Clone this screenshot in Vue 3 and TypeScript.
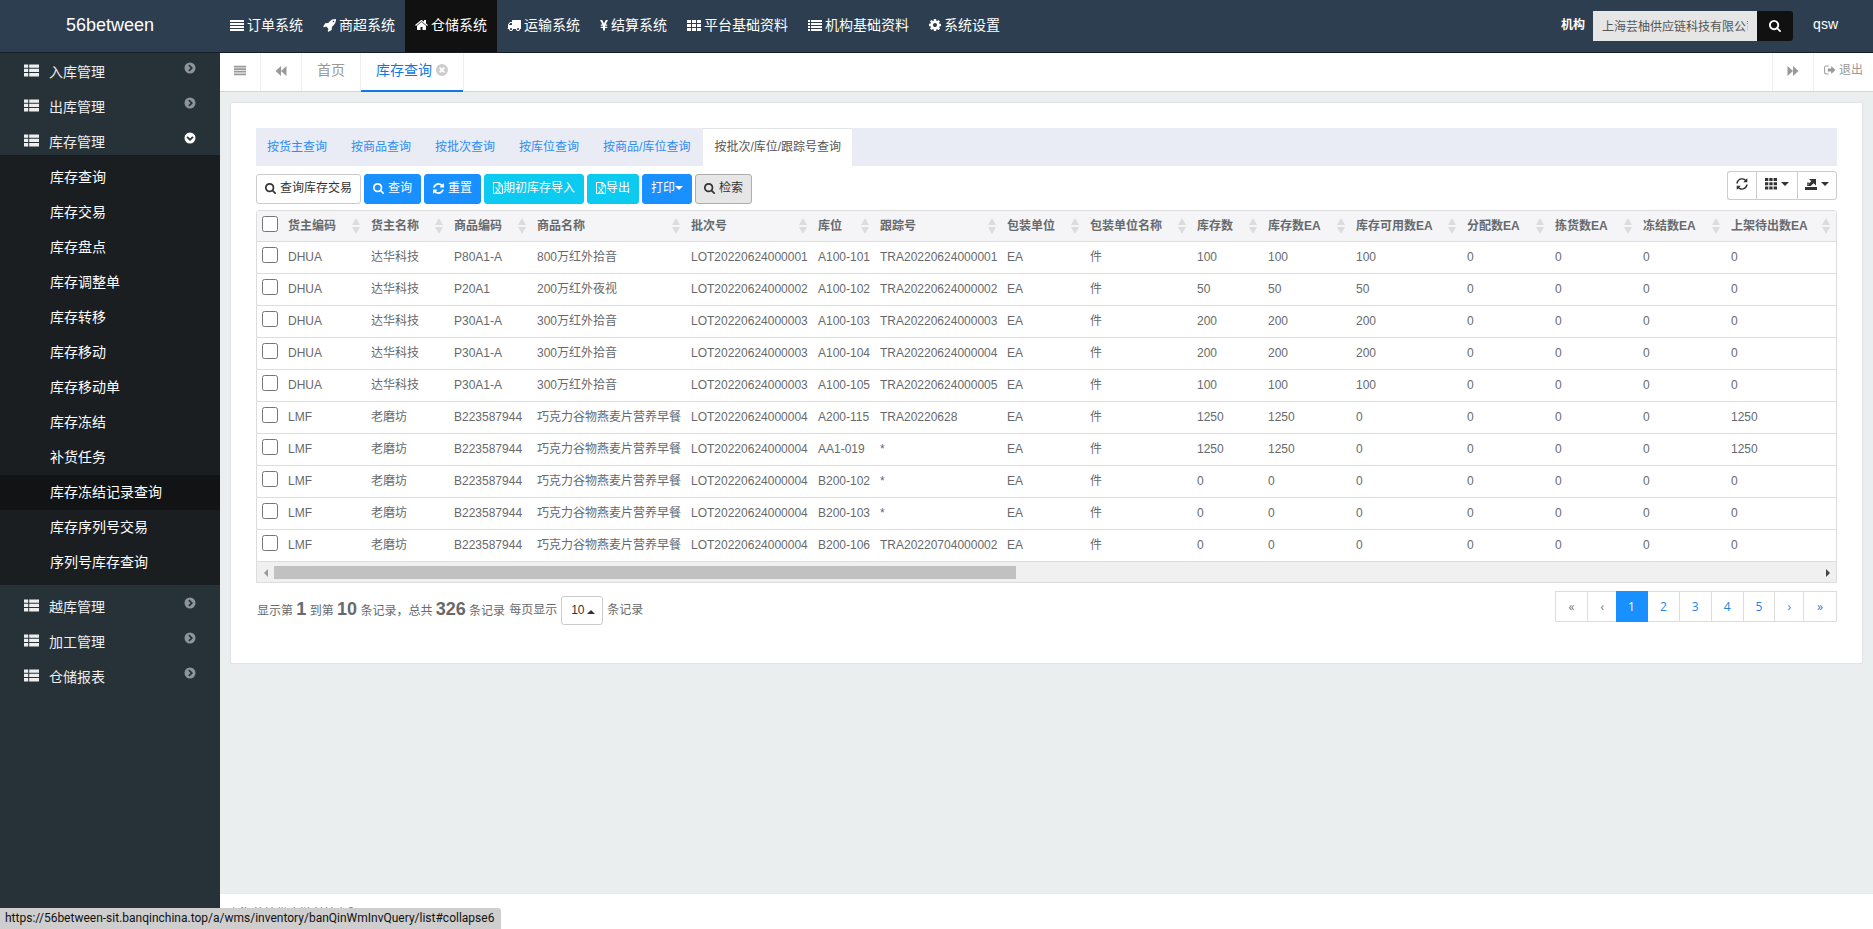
<script setup lang="ts">
import { h, ref, computed } from 'vue'

interface Glyph { box: string; d: string }
type Row = string[]

const glyphs: Record<string, Glyph> = {
  justify: { box: '0 0 14 14', d: 'M0 2h14v2H0zM0 5h14v2H0zM0 8h14v2H0zM0 11h14v2H0z' },
  rocket: { box: '0 0 1664 1792', d: 'M1440 448q0-40-28-68t-68-28-68 28-28 68 28 68 68 28 68-28 28-68zm224-288q0 249-75.5 430.5t-253.5 360.5q-81 80-195 176l-20 379q-2 16-16 26l-384 224q-7 4-16 4-12 0-23-9l-64-64q-13-14-8-32l85-276-281-281-276 85q-3 1-9 1-14 0-23-9l-64-64q-17-19-5-39l224-384q10-14 26-16l379-20q96-114 176-195 188-187 358-258t431-71q14 0 24 9.5t10 22.5z' },
  home: { box: '64 0 1664 1792', d: 'M1472 992v480q0 26-19 45t-45 19h-384v-384h-256v384h-384q-26 0-45-19t-19-45v-480q0-1 .5-3t.5-3l575-474 575 474q1 2 1 6zm223-69l-62 74q-8 9-21 11h-3q-13 0-21-7l-692-577-692 577q-12 8-24 7-13-2-21-11l-62-74q-8-10-7-23.5t11-21.5l719-599q32-26 76-26t76 26l244 204v-195q0-14 9-23t23-9h192q14 0 23 9t9 23v408l219 182q10 8 11 21.5t-7 23.5z' },
  truck: { box: '0 0 1792 1792', d: 'M640 1408q0-52-38-90t-90-38-90 38-38 90 38 90 90 38 90-38 38-90zm-384-512h384v-256h-158q-13 0-22 9l-195 195q-9 9-9 22v30zm1280 512q0-52-38-90t-90-38-90 38-38 90 38 90 90 38 90-38 38-90zm256-1088v1024q0 15-4 26.5t-13.5 18.5-16.5 11.5-23.5 6-22.5 2-25.5 0-22.5-.5q0 106-75 181t-181 75-181-75-75-181h-384q0 106-75 181t-181 75-181-75-75-181h-64q-3 0-22.5.5t-25.5 0-22.5-2-23.5-6-16.5-11.5-13.5-18.5-4-26.5q0-26 19-45t45-19v-320q0-8-.5-35t0-38 2.5-34.5 6.5-37 14-30.5 22.5-30l198-198q19-19 50.5-32t58.5-13h160v-192q0-26 19-45t45-19h1024q26 0 45 19t19 45z' },
  yen: { box: '0 0 8 14', d: 'M0 2h2.2L4 5.6 5.8 2H8L5.6 6.6H7.2v1.2H5v.9h2.2v1.2H5V12.500H3V9.900H.8V8.700H3v-.9H.8V6.600h1.600z' },
  cells: { box: '0 0 14 14', d: 'M0 2h4v3H0zM5 2h4v3H5zM10 2h4v3h-4zM0 6h4v3H0zM5 6h4v3H5zM10 6h4v3h-4zM0 10h4v3H0zM5 10h4v3H5zM10 10h4v3h-4z' },
  squares: { box: '0 0 12 12', d: 'M0 0h3.300v3H0zM4.300 0h3.300v3H4.300zM8.600 0H12v3H8.600zM0 4.300h3.300v3H0zM4.300 4.300h3.300v3H4.300zM8.600 4.300H12v3H8.600zM0 8.600h3.300v3H0zM4.300 8.600h3.300v3H4.300zM8.600 8.600H12v3H8.600z' },
  list: { box: '0 0 14 14', d: 'M0 2h2v2H0zM3 2h11v2H3zM0 5h2v2H0zM3 5h11v2H3zM0 8h2v2H0zM3 8h11v2H3zM0 11h2v2H0zM3 11h11v2H3z' },
  cog: { box: '128 0 1536 1792', d: 'M1152 896q0-106-75-181t-181-75-181 75-75 181 75 181 181 75 181-75 75-181zm512-109v222q0 12-8 23t-20 13l-185 28q-19 54-39 91 35 50 107 138 10 12 10 25t-9 23q-27 37-99 108t-94 71q-12 0-26-9l-138-108q-44 23-91 38-16 136-29 186-7 28-36 28h-222q-14 0-24.5-8.5t-11.5-21.5l-28-184q-49-16-90-37l-141 107q-10 9-25 9-14 0-25-11-126-114-165-168-7-10-7-23 0-12 8-23 15-21 51-66.5t54-70.5q-27-50-41-99l-183-27q-13-2-21-12.5t-8-23.5v-222q0-12 8-23t19-13l186-28q14-46 39-92-40-57-107-138-10-12-10-24 0-10 9-23 26-36 98.5-107.5t94.5-71.5q13 0 26 10l138 107q44-23 91-38 16-136 29-186 7-28 36-28h222q14 0 24.5 8.5t11.5 21.5l28 184q49 16 90 37l142-107q9-9 24-9 13 0 25 10 129 119 165 170 7 8 7 22 0 12-8 23-15 21-51 66.5t-54 70.5q26 50 41 98l183 28q13 2 21 12.5t8 23.5z' },
  search: { box: '64 128 1664 1664', d: 'M1216 832q0-185-131.5-316.5t-316.5-131.5-316.5 131.5-131.5 316.5 131.5 316.5 316.5 131.5 316.5-131.5 131.5-316.5zm512 832q0 52-38 90t-90 38q-54 0-90-38l-343-342q-179 124-399 124-143 0-273.5-55.5t-225-150-150-225-55.5-273.5 55.5-273.5 150-225 225-150 273.5-55.5 273.5 55.5 225 150 150 225 55.5 273.5q0 220-124 399l343 343q37 37 37 90z' },
  refresh: { box: '128 128 1536 1536', d: 'M1639 1056q0 5-1 7-64 268-268 434.5t-478 166.5q-146 0-282.5-55t-243.5-157l-129 129q-19 19-45 19t-45-19-19-45v-448q0-26 19-45t45-19h448q26 0 45 19t19 45-19 45l-137 137q71 66 161 102t187 36q134 0 250-65t186-179q11-17 53-117 8-23 30-23h192q13 0 22.5 9.5t9.5 22.5zm25-800v448q0 26-19 45t-45 19h-448q-26 0-45-19t-19-45 19-45l138-138q-148-137-349-137-134 0-250 65t-186 179q-11 17-53 117-8 23-30 23h-199q-13 0-22.5-9.5t-9.5-22.5v-7q65-268 270-434.5t480-166.5q146 0 284 55.5t245 156.500l130-129q19-19 45-19t45 19 19 45z' },
  reload: { box: '0 0 12 12', d: 'M.3 5.400C.6 2.200 3.100.2 6 .2c1.500 0 2.800.5 3.800 1.400L11.300.2v4.100H7.200l1.600-1.600C8 2 7.100 1.600 6 1.600 3.900 1.600 2.200 3 1.800 5.400zM11.700 6.600c-.3 3.200-2.800 5.200-5.700 5.200-1.500 0-2.800-.5-3.800-1.400L.7 11.800V7.700h4.100L3.200 9.300c.8.7 1.700 1.100 2.800 1.100 2.100 0 3.800-1.400 4.200-3.800z' },
  excel: { box: '0 0 10 12', d: 'M0 0h6.500L10 3.500V12H0zM1 1v10h8V4.500H5.500V1zM6.500 1.300v2.200h2.200zM2.200 5.400h2v.7h-.4L5 7.600l1-1.500h-.4v-.7h2v.7h-.5L5.500 8.200 7.200 10h.6v.7H5.600V10H6L4.900 8.800 4 10h.4v.7h-2.200V10h.5l1.700-1.900-1.600-2h-.6z' },
  thlist: { box: '0 0 15 13', d: 'M0 .5h4.200v3.300H0zM5.200.5H15v3.300H5.200zM0 4.800h4.200v3.300H0zM5.200 4.800H15v3.300H5.200zM0 9.100h4.200v3.300H0zM5.200 9.100H15v3.300H5.200z' },
  right: { box: '0 0 12 12', d: 'M6 .5a5.500 5.500 0 1 1 0 11a5.500 5.500 0 1 1 0-11zM4.300 3.700 6.600 6 4.300 8.300l1.200 1.200L9 6 5.500 2.500z' },
  down: { box: '0 0 12 12', d: 'M6 .5a5.500 5.500 0 1 1 0 11a5.500 5.500 0 1 1 0-11zM3.700 4.300 2.500 5.500 6 9l3.500-3.500-1.200-1.200L6 6.600z' },
  close: { box: '0 0 12 12', d: 'M6 0a6 6 0 1 1 0 12a6 6 0 1 1 0-12zM4.200 3 3 4.200 4.800 6 3 7.800 4.200 9 6 7.200 7.800 9 9 7.800 7.200 6 9 4.200 7.800 3 6 4.800z' },
  back: { box: '0 0 12 12', d: 'M6 1v10L.5 6zM11.500 1v10L6 6z' },
  forward: { box: '0 0 12 12', d: 'M.5 1v10L6 6zM6 1v10l5.500-5z' },
  exit: { box: '0 0 12 12', d: 'M4.500 1.500v1H2.300c-.7 0-1.200.5-1.200 1.200v4.600c0 .7.500 1.200 1.200 1.200h2.200v1H2.300A2.200 2.200 0 0 1 .1 8.300V3.700a2.200 2.200 0 0 1 2.200-2.200zM3.800 4.500h3.400V2L11.500 6 7.200 10V7.500H3.800z' },
  share: { box: '0 0 12 12', d: 'M0 9h12v3H0zM4 1h7v6.500L8.600 5.300 5.700 8.100H2.200v-1L6.300 3.200zM2.200 4.600h1.600v2H2.200z' },
  caret: { box: '0 0 8 4', d: 'M0 0h8L4 4z' },
  caretUp: { box: '0 0 8 4', d: 'M0 4h8L4 0z' },
  sort: { box: '0 0 8 16', d: 'M0 7h8L4 0zM0 9h8L4 16z' },
  leftArrow: { box: '0 0 4 8', d: 'M4 0v8L0 4z' },
  rightArrow: { box: '0 0 4 8', d: 'M0 0v8l4-4z' },
}

const Icon = (props: { name: string }) =>
  h('svg', { viewBox: glyphs[props.name].box, 'aria-hidden': 'true', class: 'icon' }, [
    h('path', { d: glyphs[props.name].d, fill: 'currentColor', 'fill-rule': 'evenodd' }),
  ])
Icon.props = ['name']

const systems = [
  { icon: 'justify', label: '订单系统' },
  { icon: 'rocket', label: '商超系统' },
  { icon: 'home', label: '仓储系统' },
  { icon: 'truck', label: '运输系统' },
  { icon: 'yen', label: '结算系统' },
  { icon: 'cells', label: '平台基础资料' },
  { icon: 'list', label: '机构基础资料' },
  { icon: 'cog', label: '系统设置' },
]
const activeSystem = ref('仓储系统')

const menu = [
  { label: '入库管理', items: [] as string[] },
  { label: '出库管理', items: [] as string[] },
  {
    label: '库存管理',
    items: ['库存查询', '库存交易', '库存盘点', '库存调整单', '库存转移', '库存移动', '库存移动单', '库存冻结', '补货任务', '库存冻结记录查询', '库存序列号交易', '序列号库存查询'],
  },
  { label: '越库管理', items: [] as string[] },
  { label: '加工管理', items: [] as string[] },
  { label: '仓储报表', items: [] as string[] },
]
const hovered = ref('库存冻结记录查询')

const views = ['按货主查询', '按商品查询', '按批次查询', '按库位查询', '按商品/库位查询', '按批次/库位/跟踪号查询']
const activeView = ref('按批次/库位/跟踪号查询')

const columns = [
  { label: '货主编码', width: 83 },
  { label: '货主名称', width: 83 },
  { label: '商品编码', width: 83 },
  { label: '商品名称', width: 154 },
  { label: '批次号', width: 127 },
  { label: '库位', width: 62 },
  { label: '跟踪号', width: 127 },
  { label: '包装单位', width: 83 },
  { label: '包装单位名称', width: 107 },
  { label: '库存数', width: 71 },
  { label: '库存数EA', width: 88 },
  { label: '库存可用数EA', width: 111 },
  { label: '分配数EA', width: 88 },
  { label: '拣货数EA', width: 88 },
  { label: '冻结数EA', width: 88 },
  { label: '上架待出数EA', width: 110 },
]

const dhua = (sku: string, name: string, lot: string, loc: string, tra: string, qty: string): Row =>
  ['DHUA', '达华科技', sku, name, 'LOT20220624' + lot, loc, 'TRA20220624' + tra, 'EA', '件', qty, qty, qty, '0', '0', '0', '0']
const lmf = (loc: string, tra: string, qty: string): Row =>
  ['LMF', '老磨坊', 'B223587944', '巧克力谷物燕麦片营养早餐', 'LOT20220624000004', loc, tra, 'EA', '件', qty, qty, '0', '0', '0', '0', qty]

const rows: Row[] = [
  dhua('P80A1-A', '800万红外拾音', '000001', 'A100-101', '000001', '100'),
  dhua('P20A1', '200万红外夜视', '000002', 'A100-102', '000002', '50'),
  dhua('P30A1-A', '300万红外拾音', '000003', 'A100-103', '000003', '200'),
  dhua('P30A1-A', '300万红外拾音', '000003', 'A100-104', '000004', '200'),
  dhua('P30A1-A', '300万红外拾音', '000003', 'A100-105', '000005', '100'),
  lmf('A200-115', 'TRA20220628', '1250'),
  lmf('AA1-019', '*', '1250'),
  lmf('B200-102', '*', '0'),
  lmf('B200-103', '*', '0'),
  lmf('B200-106', 'TRA20220704000002', '0'),
]
const picked = ref<number[]>([])
const allPicked = computed({
  get: () => picked.value.length === rows.length,
  set: (on: boolean) => { picked.value = on ? rows.map((_, i) => i) : [] },
})

const pages = ['«', '‹', '1', '2', '3', '4', '5', '›', '»']
const page = ref('1')
const pageSize = ref('10')
const org = ref('上海芸柚供应链科技有限公司')
</script>

<template>
  <div class="app">
    <header class="top">
      <a class="brand" href="#">56between</a>
      <nav class="systems">
        <a v-for="s in systems" :key="s.label" href="#" :class="{ active: s.label === activeSystem }" @click.prevent="activeSystem = s.label">
          <Icon :name="s.icon" :class="s.icon" />{{ s.label }}
        </a>
      </nav>
      <form class="org" @submit.prevent>
        <label for="org">机构</label>
        <input id="org" v-model="org" type="text" readonly>
        <button type="button" aria-label="选择机构"><Icon name="search" /></button>
      </form>
      <a class="user" href="#">qsw</a>
    </header>

    <div class="body">
      <aside class="side">
        <template v-for="m in menu" :key="m.label">
          <a class="group" href="#" @click.prevent>
            <Icon name="thlist" class="thlist" />
            <span>{{ m.label }}</span>
            <Icon :name="m.items.length ? 'down' : 'right'" class="arrow" :class="{ open: m.items.length }" />
          </a>
          <ul v-if="m.items.length" class="sub">
            <li v-for="i in m.items" :key="i">
              <a href="#" :class="{ hover: i === hovered }" @mouseenter="hovered = i" @click.prevent>{{ i }}</a>
            </li>
          </ul>
        </template>
      </aside>

      <div class="page">
        <div class="tabs">
          <button type="button" class="cell bars" aria-label="折叠菜单"><Icon name="justify" /></button>
          <button type="button" class="cell skip" aria-label="向左"><Icon name="back" /></button>
          <a class="tab" href="#">首页</a>
          <a class="tab current" href="#">库存查询<Icon name="close" /></a>
          <button type="button" class="cell skip last" aria-label="向右"><Icon name="forward" /></button>
          <a class="exit" href="#"><Icon name="exit" />退出</a>
        </div>

        <main class="card">
          <nav class="views">
            <a v-for="v in views" :key="v" href="#" :class="{ active: v === activeView }" @click.prevent="activeView = v">{{ v }}</a>
          </nav>

          <div class="toolbar">
            <div class="actions">
              <button type="button" class="btn"><Icon name="search" class="lead" />查询库存交易</button>
              <button type="button" class="btn blue"><Icon name="search" class="lead" />查询</button>
              <button type="button" class="btn blue"><Icon name="refresh" class="lead" />重置</button>
              <button type="button" class="btn cyan"><Icon name="excel" class="excel" />期初库存导入</button>
              <button type="button" class="btn cyan"><Icon name="excel" class="excel" />导出</button>
              <button type="button" class="btn blue">打印<Icon name="caret" class="caret" /></button>
              <button type="button" class="btn pressed"><Icon name="search" class="lead" />检索</button>
            </div>
            <div class="tools">
              <button type="button" aria-label="刷新"><Icon name="reload" /></button>
              <button type="button" aria-label="列"><Icon name="squares" /><Icon name="caret" class="caret" /></button>
              <button type="button" aria-label="导出数据"><Icon name="share" /><Icon name="caret" class="caret" /></button>
            </div>
          </div>

          <div class="records">
            <table>
              <colgroup>
                <col class="pick">
                <col v-for="c in columns" :key="c.label" :style="{ width: c.width + 'px' }">
              </colgroup>
              <thead>
                <tr>
                  <th><input v-model="allPicked" type="checkbox" aria-label="全选"></th>
                  <th v-for="c in columns" :key="c.label" scope="col">
                    <div class="head">{{ c.label }}<Icon name="sort" class="sort" /></div>
                  </th>
                </tr>
              </thead>
              <tbody>
                <tr v-for="(r, i) in rows" :key="i">
                  <td><input v-model="picked" type="checkbox" :value="i" :aria-label="'选择第' + (i + 1) + '行'"></td>
                  <td v-for="(cell, j) in r" :key="j">{{ cell }}</td>
                </tr>
              </tbody>
            </table>
            <div class="scroll">
              <Icon name="leftArrow" class="dim" />
              <div class="track"><div class="thumb"></div></div>
              <Icon name="rightArrow" />
            </div>
          </div>

          <div class="foot">
            <div class="info">
              <span>显示第 <b>1</b> 到第 <b>10</b> 条记录，总共 <b>326</b> 条记录</span>
              <label for="size">每页显示</label>
              <span class="size">
                <select id="size" v-model="pageSize"><option>10</option><option>25</option><option>50</option></select>
                <Icon name="caretUp" class="caret" />
              </span>
              <span>条记录</span>
            </div>
            <nav class="pager" aria-label="分页">
              <a v-for="(p, i) in pages" :key="p" href="#" :class="{ active: p === page, off: i < 2 }" @click.prevent>{{ p }}</a>
            </nav>
          </div>
        </main>

        <footer class="bottom">上海芸柚供应链科技<a href="#">有限公司</a></footer>
      </div>
    </div>

    <div class="status">https://56between-sit.banqinchina.top/a/wms/inventory/banQinWmInvQuery/list#collapse6</div>
  </div>
</template>

<style>
body { margin: 0; }
</style>

<style scoped>
.app {
  min-height: 100vh;
  display: flex;
  flex-direction: column;
  font: 12px/18px "Liberation Sans", "Noto Sans CJK SC", sans-serif;
  color: #676a6c;
}
.app *, .app *::before { box-sizing: border-box; }
a { color: inherit; text-decoration: none; }
button, input, select { font: inherit; color: inherit; margin: 0; }
button { cursor: pointer; }
.icon { display: block; flex: none; width: 12px; height: 12px; }
.icon.caret { width: 8px; height: 4px; }

.top {
  display: flex;
  height: 53px;
  background: #2c3e50;
  border-bottom: 1px solid #161d24;
  color: #fff;
}
.brand { width: 220px; text-align: center; font-size: 18px; line-height: 50px; }
.systems { display: flex; flex: 1; font-size: 14px; line-height: 50px; }
.systems a { display: flex; align-items: center; gap: 3px; padding: 0 10px 2px; white-space: nowrap; }
.systems a.active { background: #111; }
.systems .icon { width: 14px; height: 14px; }
.systems .icon.rocket, .systems .icon.home { width: 13px; }
.systems .icon.yen { width: 8px; }
.systems .icon.cog { width: 12px; }
.org { display: flex; align-items: center; }
.org label { font-weight: 700; margin-right: 8px; padding-bottom: 2px; }
.org input {
  width: 164px;
  height: 30px;
  padding: 0 8px 2px;
  border: 1px solid #e5e6e7;
  border-radius: 0;
  background: #e6e6e6;
  color: #555;
}
.org button {
  width: 36px;
  height: 30px;
  padding: 0 12px;
  border: 0;
  border-radius: 0 3px 3px 0;
  background: #111;
  color: #fff;
}
.user { padding: 0 35px 0 20px; font-size: 14px; line-height: 48px; }

.body { flex: 1; display: flex; }
.side { width: 220px; flex: none; background: #263238; color: #eee; font-size: 14px; }
.group { display: flex; height: 35px; padding: 0 24px; align-items: flex-start; }
.group:first-child { height: 32px; }
.group span { flex: 1; margin-left: 10px; line-height: 20px; padding-top: 12px; }
.group .thlist { width: 15px; height: 13px; margin-top: 14px; }
.group .arrow { margin-top: 12px; color: #8e959a; }
.group .arrow.open { color: #fff; }
.group:first-child span { padding-top: 9px; }
.group:first-child .thlist { margin-top: 11px; }
.group:first-child .arrow { margin-top: 9px; }
.sub { list-style: none; margin: 0; padding: 5px 0; background: #1a1e21; color: #fff; }
.sub a { display: block; padding-left: 50px; line-height: 35px; }
.sub a.hover { background: #111315; }

.page { flex: 1; min-width: 0; display: flex; flex-direction: column; background: #ebeeef; }
.tabs {
  display: flex;
  height: 39px;
  background: #fff;
  border-bottom: 1px solid #d2d6d8;
  color: #999;
}
.cell { display: flex; justify-content: center; padding: 0; border: 0; border-right: 1px solid #eee; background: none; width: 41px; }
.bars .icon { margin-top: 11px; }
.skip .icon { margin-top: 12px; }
.cell.last { margin-left: auto; border-left: 1px solid #eee; width: 42px; }
.tab { padding: 0 15px; border-right: 1px solid #eee; font-size: 14px; line-height: 34px; min-width: 59px; }
.tab.current { display: flex; gap: 4px; color: #1177e8; box-shadow: inset 0 -2px #1177e8; height: 39px; }
.tab.current .icon { margin-top: 11px; color: #ccc; }
.exit { display: flex; gap: 3px; padding: 0 10px; line-height: 34px; }
.exit .icon { margin-top: 11px; }

.card {
  margin: 10px 10px 0;
  padding: 25px 25px 38px;
  background: #fff;
  border: 1px solid #e1e4e6;
  border-radius: 2px;
}
.views { display: flex; gap: 2px; height: 38px; background: #e9ebf5; color: #2e8df5; }
.views a { padding: 0 11px; line-height: 38px; }
.views a.active { background: #fff; color: #555; border-top: 1px solid #e1e4e6; line-height: 36px; }

.toolbar { display: flex; justify-content: space-between; align-items: flex-start; height: 44px; }
.actions { display: flex; gap: 3px; margin-top: 8px; }
.btn {
  display: flex;
  align-items: center;
  height: 30px;
  padding: 0 8px 2px;
  border: 1px solid #ccc;
  border-radius: 3px;
  background: #fff;
  color: #333;
}
.btn .lead { width: 11px; height: 11px; margin-right: 4px; }
.btn .excel { width: 10px; }
.btn.blue { background: #1890ff; border-color: #1890ff; color: #fff; }
.btn.cyan { background: #0dcaf0; border-color: #0dcaf0; color: #fff; }
.btn.pressed { background: #e6e6e6; border-color: #adadad; }
.tools { display: flex; margin-top: 5px; }
.tools button {
  display: flex;
  align-items: center;
  gap: 4px;
  height: 29px;
  padding: 0 8px 3px;
  border: 1px solid #ccc;
  border-right: 0;
  background: #fff;
  color: #333;
}
.tools button:first-child { border-radius: 3px 0 0 3px; }
.tools button:last-child { border-right: 1px solid #ccc; border-radius: 0 3px 3px 0; padding: 0 7px 3px; }

.records { border: 1px solid #ddd; border-radius: 3px 3px 0 0; overflow: hidden; }
table { width: 100%; table-layout: fixed; border-collapse: separate; border-spacing: 0; }
.pick { width: 26px; }
th, td { padding: 0 0 0 5px; text-align: left; white-space: nowrap; border-bottom: 1px solid #ddd; height: 32px; line-height: 18px; }
th { height: 31px; background: #f5f5f8; font-weight: 700; }
.head { display: flex; align-items: center; justify-content: space-between; padding-right: 6px; }
.icon.sort { width: 8px; height: 16px; color: #dcdcdc; }
td { padding-bottom: 1px; }
input[type="checkbox"] { display: block; width: 16px; height: 16px; margin: 0 0 4px; }
.scroll { display: flex; align-items: center; height: 20px; padding: 1px 6px 0 7px; background: #f0f0f0; color: #444; }
.scroll .icon { width: 4px; height: 8px; }
.scroll .icon.dim { color: #999; }
.track { flex: 1; margin: 0 6px; }
.thumb { width: 48%; height: 13px; background: #c1c1c1; }

.foot { display: flex; justify-content: space-between; align-items: flex-start; margin-top: 8px; }
.info { display: flex; align-items: center; gap: 4px; height: 29px; margin-top: 5px; padding-left: 1px; }
.info > span, .info > label { padding-bottom: 1px; }
.info b { font-size: 18px; line-height: 18px; }
.info .size { display: flex; align-items: center; padding: 0; }
.size select {
  appearance: none;
  width: 42px;
  height: 29px;
  padding: 0 9px 1px;
  border: 1px solid #ccc;
  border-radius: 3px;
  background: #fff;
  color: #333;
}
.size .icon { margin: 2px 8px 0 -16px; color: #333; }
.pager { display: flex; border: 1px solid #ddd; border-right: 0; font-family: "Open Sans", "Liberation Sans", sans-serif; color: #1c84e8; }
.pager a { padding: 0 12px; line-height: 29px; border-right: 1px solid #ddd; }
.pager a:first-child, .pager a:last-child { padding: 0 13px; }
.pager a.off { color: #777; }
.pager a.active { background: #1890ff; color: #fff; margin: -1px 0 -1px -1px; padding: 1px 12px; border-color: #1890ff; }

.bottom { margin-top: auto; height: 36px; padding: 11px 8px 0; background: #fff; border-top: 1px solid #e7eaec; overflow: hidden; }
.bottom a { color: #1c84c6; }
.status {
  position: fixed;
  left: 0;
  bottom: 0;
  height: 21px;
  padding: 0 7px 0 5px;
  border-radius: 0 3px 0 0;
  background: #cecece;
  color: #111;
  font: 12px/21px Roboto, "Noto Sans", sans-serif;
}
</style>
